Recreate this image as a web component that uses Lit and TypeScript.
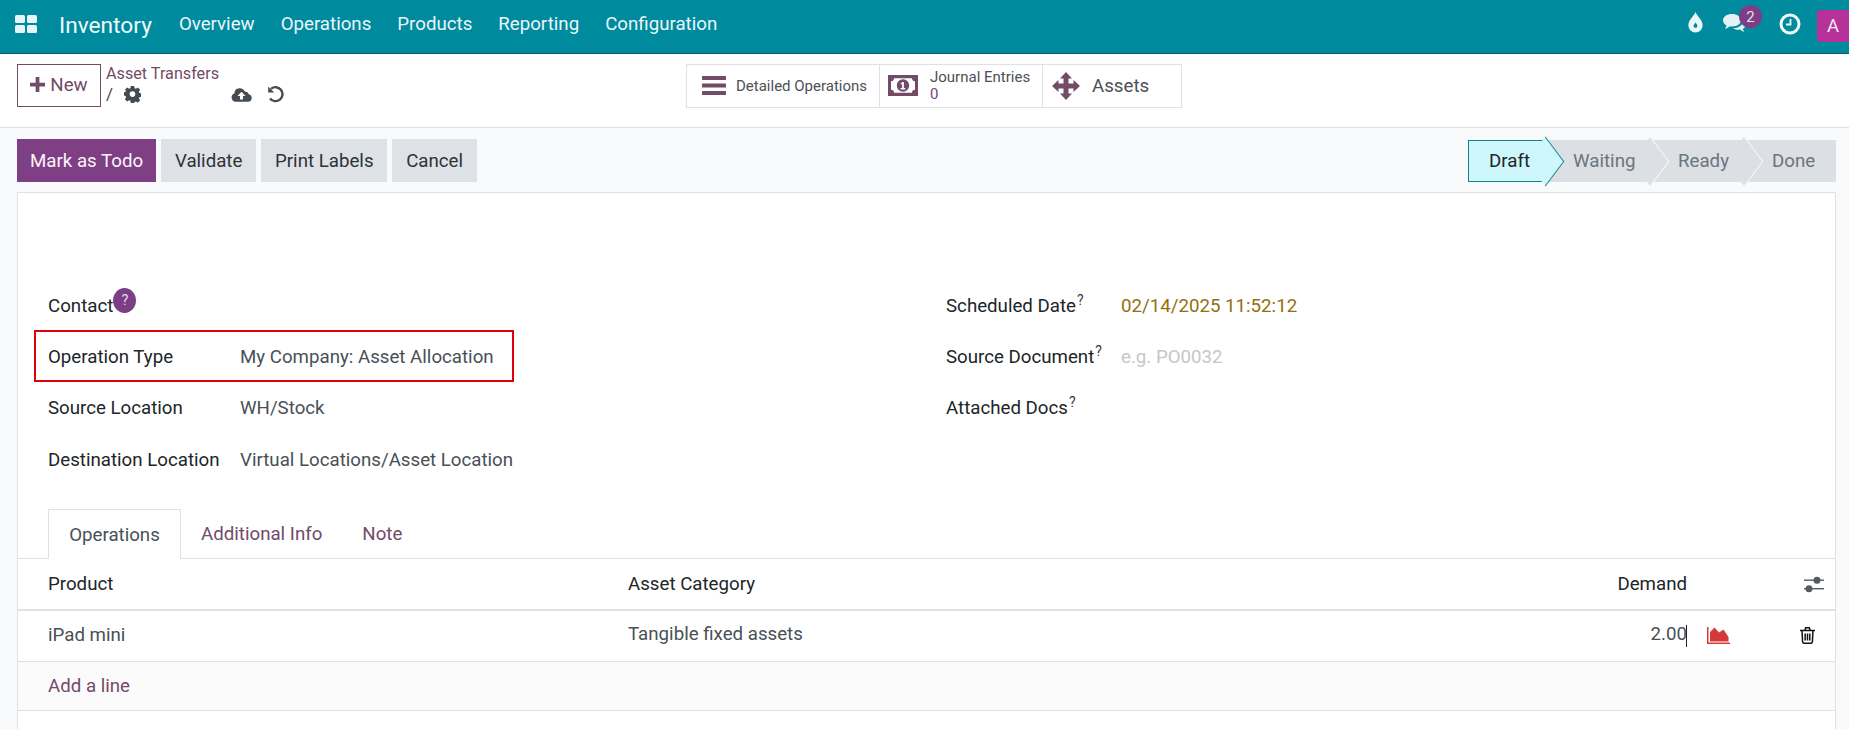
import { LitElement, html, css, svg } from "lit";
import { customElement } from "lit/decorators.js";

const I = {
  grid: svg`<rect x="0" y="0" width="10" height="8" rx="1.5"/><rect x="12" y="0" width="10" height="8" rx="1.5"/><rect x="0" y="10" width="10" height="8" rx="1.5"/><rect x="12" y="10" width="10" height="8" rx="1.5"/>`,
  plus: svg`<path d="M6 0h4v6h6v4h-6v6H6v-6H0V6h6z"/>`,
  cog: svg`<path fill-rule="evenodd" d="M8 0h4l.5 2.600 1.500.6 2.200-1.500 2.800 2.800-1.500 2.200.6 1.500 2.400.5v4l-2.400.5-.6 1.500 1.500 2.200-2.800 2.800-2.200-1.500-1.500.6L12 20H8l-.5-2.600-1.500-.6-2.200 1.500L1 15.500l1.500-2.200-.6-1.500L0 11.300v-4l1.900-.5.6-1.500L1 4.500l2.800-2.800L6 3.200l1.500-.6zM10 6.200a3.300 3.300 0 1 0 0 6.600 3.300 3.300 0 0 0 0-6.600z"/>`,
  cloud: svg`<path fill-rule="evenodd" d="M5 15.500A4.600 4.600 0 0 1 3.600 6.600 5.500 5.500 0 0 1 8.800 1.500a6 6 0 0 1 5.800 3.700 3.300 3.300 0 0 1 4 2.600 3.900 3.900 0 0 1-1 7.700zM11 5.200 6.800 9.600h2.600v3.600h3.200V9.600h2.600z"/>`,
  bars: svg`<rect y="0" width="24" height="4" rx=".6"/><rect y="7.500" width="24" height="4" rx=".6"/><rect y="15" width="24" height="4" rx=".6"/>`,
  money: svg`<path fill-rule="evenodd" d="M0 0h30v21H0zM6 3.200a3 3 0 0 1-3 3v8.600a3 3 0 0 1 3 3h18a3 3 0 0 1 3-3V6.200a3 3 0 0 1-3-3zM15 4.300a6.200 6.200 0 1 1 0 12.400 6.200 6.200 0 0 1 0-12.400zM14.600 7l-2.200 1.400.7 1.200 1-.6v4h-1.500v1.400h4.700V13h-1.400V7z"/>`,
  arrows: svg`<path d="M14 0l6 6.500h-3.500v5h5V8l6.500 6-6.500 6v-3.500h-5v5H20L14 28l-6-6.500h3.500v-5h-5V20L0 14l6.500-6v3.500h5v-5H8z"/>`,
  drop: svg`<path fill-rule="evenodd" d="M7.500 0C9 4 15 8.500 15 14a7.500 7.500 0 0 1-15 0C0 8.500 6 4 7.500 0zM7.500 11c-1 1.500-2 2.500-2 3.600a2 2 0 0 0 4 0c0-1.100-1-2.100-2-3.600z"/>`,
  comments: svg`<path d="M9 0c5 0 9 2.700 9 6.200s-4 6.200-9 6.200c-.8 0-1.600 0-2.300-.2C5.400 13.500 3.600 14.400 1.800 14.800c.8-1 1.400-2 1.700-3.300C1.400 10.400 0 8.400 0 6.200 0 2.700 4 0 9 0z"/><path d="M19.500 6.500c1.800 1 3 2.500 3 4.200 0 1.800-1 3.200-2.600 4.200.2 1.100.8 2 1.500 3-1.700-.4-3.200-1.200-4.400-2.400-.6.100-1.300.2-2 .2-2 0-3.800-.6-5.100-1.500 5 .2 9.800-2.500 9.800-6.700 0-.2 0-.7-.2-1z"/>`,
  chart: svg`<path d="M0 0h1.500v15.500H23V17H0z"/><path d="M3 14.500V5L7.500 0.500 12 5.500 16.500 2.500 21.500 10v4.500z"/>`,
};

const ic = (w: number, h: number, vb: string, body: unknown, cls = "") =>
  html`<svg class="ic ${cls}" style="width:${w}px;height:${h}px" viewBox=${vb} fill="currentColor">${body}</svg>`;

@customElement("app-root")
export class AppRoot extends LitElement {
  static styles = css`
    :host { display: block; width: 1849px; height: 729px; overflow: hidden; background: #f9fafb;
      font-family: Roboto, "Liberation Sans", sans-serif; font-size: 18.700px; color: #212529; }
    * { box-sizing: border-box; }
    .ic { display: block; flex: none; }

    .nav { height: 54px; background: #008a9e; border-bottom: 1px solid #045a66; color: #e9f6f8; display: flex; align-items: center; }
    .apps { margin-left: 15px; color: #e6f5f7; position: relative; top: -3px; }
    .brand { margin-left: 22px; font-size: 22.700px; margin-right: 27px; color: #eef9fa; position: relative; top: -1px; }
    .menu { display: flex; gap: 26px; position: relative; top: -3px; }
    .sys { margin-left: auto; display: flex; align-items: center; height: 100%; position: relative; }
    .drop { margin-right: 20px; color: #eaf7f8; position: relative; top: -4px; }
    .chat { position: relative; margin-right: 33px; color: #e2f3f5; top: -3px; }
    .badge { position: absolute; left: 16px; top: -9px; width: 23px; height: 23px; border-radius: 50%;
      background: #7c3f86; color: #e9dfeb; font-size: 15px; display: flex; align-items: center; justify-content: center; }
    .clock { margin-right: 16px; position: relative; top: -3px; }
    .avatar { width: 32px; height: 32px; background: #b5329b; border-radius: 3px 0 0 3px; color: #f7e9f4; position: relative; top: -1px;
      display: flex; align-items: center; justify-content: center; font-size: 18.500px; }

    .cp { height: 74px; background: #fff; border-bottom: 1px solid #dee2e6; padding: 10px 0 0 17px; display: flex; align-items: flex-start; }
    .new { width: 84px; height: 43px; padding-bottom: 2px; border: 1px solid #714b67; color: #714b67; display: flex; align-items: center; justify-content: center; gap: 5px; }
    .crumb { width: 232px; margin-left: 5px; color: #212529; }
    .crumb a { display: block; color: #714b67; font-size: 16.200px; line-height: 19px; }
    .crumb-line { display: flex; align-items: center; height: 24px; margin-top: -1px; color: #444b53; font-size: 17px; }
    .slash { width: 18px; }
    .sp1 { width: 90px; flex: none; }
    .sp2 { width: 15px; flex: none; }
    .box { margin-left: 348px; height: 44px; width: 496px; border: 1px solid #dee2e6; display: flex; color: #4b5157; }
    .st { display: flex; align-items: center; border-right: 1px solid #dee2e6; color: #4b5157; padding-bottom: 1px; }
    .st:last-child { border-right: 0; }
    .st .ic { color: #714b67; }
    .st1 { width: 193px; padding-left: 15px; gap: 10px; font-size: 15px; }
    .st2 { width: 163px; padding-left: 8px; gap: 12px; font-size: 15px; line-height: 17px; }
    .st2 b { display: block; font-weight: 400; color: #7c3f86; }
    .st3 { flex: 1; padding-left: 9px; gap: 12px; font-size: 18.700px; }

    .bar { display: flex; padding: 11px 13px 0 17px; height: 64px; }
    .btns { display: flex; gap: 5px; height: 43px; }
    .btn { display: flex; align-items: center; padding: 0 13.800px; background: #dee2e6; color: #2d3338; }
    .btn.p { padding: 0 13px; background: #7f3f85; color: #fbf5fb; }
    .steps { margin-left: auto; display: flex; height: 42px; margin-top: 1px; }
    .step { position: relative; background: #dcdfe4; color: #6c757d; display: flex; align-items: center; }
    .step::after { content: ""; position: absolute; z-index: 1; right: -16px; top: 6px; width: 30px; height: 30px;
      transform: rotate(45deg) skew(8deg, 8deg); background: #dcdfe4; border-top: 1.500px solid #f9fafb; border-right: 1.500px solid #f9fafb; }
    .step:last-child::after { display: none; }
    .step.on { background: #cdf7fb; color: #212529; border: 1px solid #17808e; border-right: 0; z-index: 3; }
    .step.on::after { background: #cdf7fb; border-color: #17808e; right: -16px; top: 5px; }
    .step span { position: relative; z-index: 2; }
    .s0 { width: 77px; padding-left: 20px; }
    .s1 { width: 105px; padding-left: 28px; }
    .s2 { width: 94px; padding-left: 28px; }
    .s3 { width: 92px; padding-left: 28px; }

    .sheet { margin: 0 13px 0 17px; height: 537px; background: #fff; border: 1px solid #dee2e6; border-bottom: 0; padding-top: 87px; }
    .groups { display: grid; grid-template-columns: 898px 1fr; padding-left: 30px; height: 229px; position: relative; }
    .row { display: flex; align-items: center; height: 51px; }
    .row.last { margin-top: 1px; }
    .lab { width: 192px; flex: none; color: #212529; }
    .r .lab { width: 175px; }
    .val { color: #495057; }
    .sup { font-size: 14px; line-height: 0; position: relative; top: -7px; margin-left: 1px; color: #343a40; }
    .help { width: 23px; height: 25px; margin: -10px 0; border-radius: 50%; background: #7c3f86; color: #e6d9e8; font-size: 14.500px; display: inline-flex;
      align-items: center; justify-content: center; position: relative; top: -7px; vertical-align: baseline; }
    .date { color: #92700f; }
    .ph { color: #c3c7cb; }
    .mark { position: absolute; left: 16px; top: 50px; width: 480px; height: 52px; border: 2.500px solid #e00007; pointer-events: none; }

    .tabs { display: flex; height: 50px; padding-left: 30px; border-bottom: 1px solid #dee2e6; color: #714b67; }
    .tab { padding: 0 20px; display: flex; align-items: center; }
    .tab.on { width: 133px; height: 50px; justify-content: center; padding: 0; border: 1px solid #dee2e6; border-bottom: 0; background: #fff; color: #495057; }
    .thead, .trow { display: grid; grid-template-columns: 580px 1fr 148px; padding-left: 30px; align-items: center; }
    .thead { height: 52px; border-bottom: 2px solid #dee2e6; color: #212529; }
    .trow { height: 51px; padding-bottom: 2px; border-bottom: 1px solid #dee2e6; color: #495057; }
    .add { height: 49px; line-height: 49px; padding-left: 30px; background: #fbfbfc; border-bottom: 1px solid #dee2e6; color: #714b67; }
    .split { display: flex; justify-content: space-between; }
    .end { display: flex; align-items: center; height: 100%; }
    .caret { display: inline-block; width: 1px; height: 22px; background: #212529; vertical-align: middle; margin-left: -1px; }
    .chart { color: #d33a38; margin-left: 20px; }
    .trash { color: #111; margin-left: 70px; }
    .sliders { color: #545b62; margin-left: 117px; }
  `;

  render() {
    return html`
      <div class="nav">
        <span class="apps">${ic(22, 18, "0 0 22 18", I.grid)}</span>
        <span class="brand">Inventory</span>
        <div class="menu"><span>Overview</span><span>Operations</span><span>Products</span><span>Reporting</span><span>Configuration</span></div>
        <div class="sys">
          <span class="drop">${ic(15, 21, "0 0 15 22", I.drop)}</span>
          <span class="chat">${ic(23, 19, "0 0 23 19", I.comments)}<span class="badge">2</span></span>
          <span class="clock"><svg class="ic" width="22" height="22" viewBox="0 0 22 22" fill="none" stroke="#eef8f9"><circle cx="11" cy="11" r="9" stroke-width="3"/><path d="M11.500 6v5.500H7" stroke-width="1.800"/></svg></span>
          <span class="avatar">A</span>
        </div>
      </div>

      <div class="cp">
        <div class="new">${ic(15, 15, "0 0 16 16", I.plus)}<span>New</span></div>
        <div class="crumb">
          <a>Asset Transfers</a>
          <div class="crumb-line">
            <span class="slash">/</span>
            ${ic(17, 17, "0 0 20 20", I.cog)}
            <span class="sp1"></span>
            ${ic(21, 17, "0 0 22 16", I.cloud)}
            <span class="sp2"></span>
            <svg class="ic" width="17" height="18" viewBox="0 0 17 18" fill="none" stroke="currentColor" stroke-width="2.400"><path d="M4 3.800A7 7 0 1 1 3 13.500"/><path d="M1.200 1.500v6h6" fill="currentColor" stroke="none"/></svg>
          </div>
        </div>
        <div class="box">
          <div class="st st1">${ic(24, 19, "0 0 24 19", I.bars)}<span>Detailed Operations</span></div>
          <div class="st st2">${ic(30, 21, "0 0 30 21", I.money)}<span>Journal Entries<b>0</b></span></div>
          <div class="st st3">${ic(28, 28, "0 0 28 28", I.arrows)}<span>Assets</span></div>
        </div>
      </div>

      <div class="bar">
        <div class="btns">
          <div class="btn p">Mark as Todo</div><div class="btn">Validate</div><div class="btn">Print Labels</div><div class="btn">Cancel</div>
        </div>
        <div class="steps">
          <div class="step on s0"><span>Draft</span></div>
          <div class="step s1"><span>Waiting</span></div>
          <div class="step s2"><span>Ready</span></div>
          <div class="step s3"><span>Done</span></div>
        </div>
      </div>

      <div class="sheet">
        <div class="groups">
          <div>
            <div class="row"><span class="lab">Contact<span class="help">?</span></span></div>
            <div class="row"><span class="lab">Operation Type</span><span class="val">My Company: Asset Allocation</span></div>
            <div class="row"><span class="lab">Source Location</span><span class="val">WH/Stock</span></div>
            <div class="row last"><span class="lab">Destination Location</span><span class="val">Virtual Locations/Asset Location</span></div>
          </div>
          <div class="r">
            <div class="row"><span class="lab">Scheduled Date<span class="sup">?</span></span><span class="date">02/14/2025 11:52:12</span></div>
            <div class="row"><span class="lab">Source Document<span class="sup">?</span></span><span class="ph">e.g. PO0032</span></div>
            <div class="row"><span class="lab">Attached Docs<span class="sup">?</span></span></div>
          </div>
          <div class="mark"></div>
        </div>
        <div class="tabs">
          <div class="tab on">Operations</div><div class="tab">Additional Info</div><div class="tab">Note</div>
        </div>
        <div class="thead">
          <span>Product</span><span class="split"><span>Asset Category</span><span>Demand</span></span>
          <span class="end"><svg class="ic sliders" width="20" height="17" viewBox="0 0 20 17" fill="currentColor"><rect y="3.500" width="20" height="1.400"/><rect y="12" width="20" height="1.400"/><circle cx="13" cy="4.200" r="3.500"/><circle cx="5" cy="12.700" r="3.500"/></svg></span>
        </div>
        <div class="trow">
          <span>iPad mini</span><span class="split"><span>Tangible fixed assets</span><span>2.00<i class="caret"></i></span></span>
          <span class="end">
            ${ic(23, 17, "0 0 23 17", I.chart, "chart")}
            <svg class="ic trash" width="15" height="17" viewBox="0 0 15 17" fill="none" stroke="currentColor" stroke-width="1.500"><path d="M0 3.500h15M2 3.500l.6 11.200q.1 1.500 1.600 1.500h6.600q1.500 0 1.600-1.500l.6-11.200M4.800 3.500l.9-2.700h3.600l.9 2.700M5.200 6.500v7M7.500 6.500v7M9.800 6.500v7"/></svg>
          </span>
        </div>
        <div class="add">Add a line</div>
      </div>
    `;
  }
}
